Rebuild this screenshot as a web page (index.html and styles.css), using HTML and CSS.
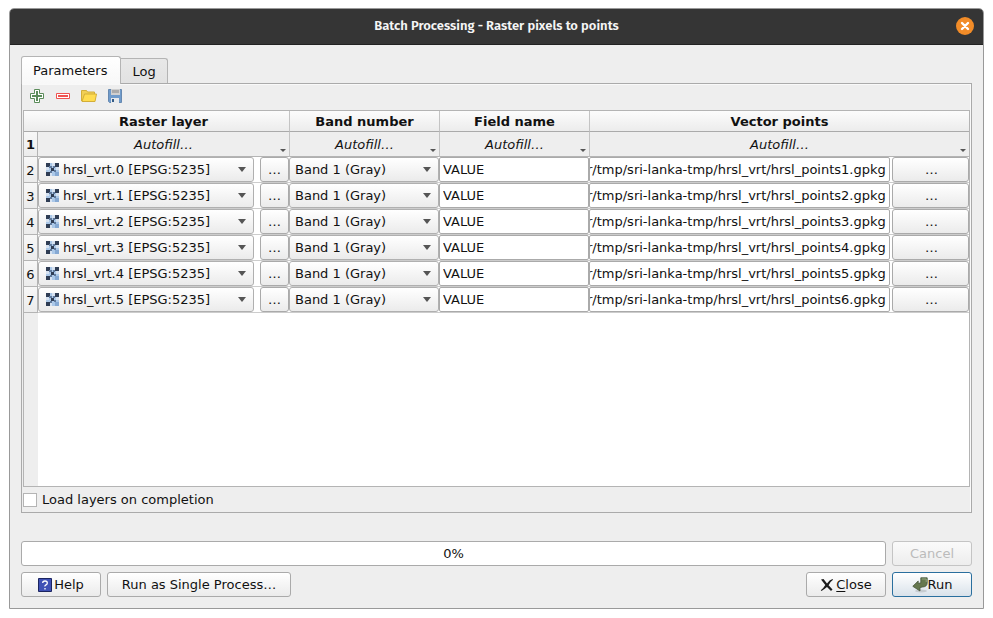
FILE: index.html
```html
<!DOCTYPE html>
<html lang="en">
<head>
<meta charset="utf-8">
<title>Batch Processing</title>
<link rel="stylesheet" href="styles.css">
</head>
<body>
<svg class="defs" aria-hidden="true">
  <symbol id="raster" viewBox="0 0 13 13">
    <path fill="#abc8e8" d="M0 0h13v13H0z"/>
    <path fill="#d6e2f1" d="M6 0h3v3H6zM0 4h3v3H0zM10 4h3v3h-3zM4 10h2v3H4z"/>
    <path fill="#2f3d54" d="M0 0h4v4H0zM9 0h4v4H9zM5 5h3v3H5zM0 9h4v4H0z"/>
    <path fill="#60799b" d="M3 3h3v2H3zM7 3h2v2H7zM4 8h2v2H4zM8 7h2v2H8z"/>
    <path fill="#86a9d3" d="M9 9h4v4H9z"/>
  </symbol>
</svg>
<main class="window">
  <header class="titlebar">
    <h1>Batch Processing - Raster pixels to points</h1>
    <button class="close" type="button" aria-label="Close window">
      <svg width="18" height="18" viewBox="0 0 18 18"><circle cx="9" cy="9" r="9" fill="#f28c28"/><path d="M6 6l6 6M12 6l-6 6" stroke="#fff" stroke-width="2.4" stroke-linecap="round"/></svg>
    </button>
  </header>
  <div class="content">
    <div class="tabs" role="tablist">
      <button class="tab active" type="button" role="tab" aria-selected="true">Parameters</button>
      <button class="tab" type="button" role="tab" aria-selected="false">Log</button>
    </div>
    <section class="pane" role="tabpanel">
      <div class="toolbar">
        <button type="button" aria-label="Add row"><svg width="16" height="16" viewBox="0 0 16 16"><path d="M5.500 1.500h5v4h4v5h-4v4h-5v-4h-4v-5h4z" fill="#fff" stroke="#5b8c5a"/><path d="M7 3h2v4h4v2H9v4H7V9H3V7h4z" fill="#5b8c5a"/></svg></button>
        <button type="button" aria-label="Remove row"><svg width="16" height="16" viewBox="0 0 16 16"><path d="M1.500 5.500h13v5h-13z" fill="#fff" stroke="#ef5350"/><path d="M3 7h10v2H3z" fill="#ef5350"/></svg></button>
        <button type="button" aria-label="Open"><svg width="16" height="16" viewBox="0 0 16 16"><path d="M.5 13V2.500h5l1 1.500h7v2" fill="#f1cf55" stroke="#d3ae38"/><path d="M1 13.500L3.500 6H15.500L14 13.500z" fill="#ffdc4f" stroke="#d3ae38"/></svg></button>
        <button type="button" aria-label="Save"><svg width="16" height="16" viewBox="0 0 16 16"><path d="M1.500 1.500h13v13h-12l-1-1z" fill="#6f9bcb" stroke="#6688b0"/><path d="M4 1h9v6H4z" fill="#d0d0d0"/><path d="M5 2h7v3H5z" fill="#aaa"/><path d="M4 10h8v5H4z" fill="#e8eaec"/><path d="M5 11h2v3H5z" fill="#335b87"/></svg></button>
      </div>
      <div class="table-frame">
        <table>
          <colgroup><col class="c-num"><col class="c-layer"><col class="c-mid"><col class="c-mid"><col></colgroup>
          <thead>
            <tr><td class="corner"></td><th scope="col">Raster layer</th><th scope="col">Band number</th><th scope="col">Field name</th><th scope="col">Vector points</th></tr>
          </thead>
          <tbody>
            <tr class="autofill"><th scope="row">1</th>
              <td><button type="button">Autofill…</button></td><td><button type="button">Autofill…</button></td><td><button type="button">Autofill…</button></td><td><button type="button">Autofill…</button></td></tr>
            <tr><th scope="row">2</th>
              <td><div class="cell layer"><span class="combo"><svg><use href="#raster"/></svg><select aria-label="Raster layer"><option>hrsl_vrt.0 [EPSG:5235]</option></select></span><button class="btn" type="button">…</button></div></td>
              <td><div class="cell"><span class="combo"><select aria-label="Band number"><option>Band 1 (Gray)</option></select></span></div></td>
              <td><div class="cell"><input class="field" type="text" aria-label="Field name" value="VALUE"></div></td>
              <td><div class="cell output"><input class="field path" type="text" aria-label="Vector points" value="r/tmp/sri-lanka-tmp/hrsl_vrt/hrsl_points1.gpkg"><button class="btn" type="button">…</button></div></td></tr>
            <tr><th scope="row">3</th>
              <td><div class="cell layer"><span class="combo"><svg><use href="#raster"/></svg><select aria-label="Raster layer"><option>hrsl_vrt.1 [EPSG:5235]</option></select></span><button class="btn" type="button">…</button></div></td>
              <td><div class="cell"><span class="combo"><select aria-label="Band number"><option>Band 1 (Gray)</option></select></span></div></td>
              <td><div class="cell"><input class="field" type="text" aria-label="Field name" value="VALUE"></div></td>
              <td><div class="cell output"><input class="field path" type="text" aria-label="Vector points" value="r/tmp/sri-lanka-tmp/hrsl_vrt/hrsl_points2.gpkg"><button class="btn" type="button">…</button></div></td></tr>
            <tr><th scope="row">4</th>
              <td><div class="cell layer"><span class="combo"><svg><use href="#raster"/></svg><select aria-label="Raster layer"><option>hrsl_vrt.2 [EPSG:5235]</option></select></span><button class="btn" type="button">…</button></div></td>
              <td><div class="cell"><span class="combo"><select aria-label="Band number"><option>Band 1 (Gray)</option></select></span></div></td>
              <td><div class="cell"><input class="field" type="text" aria-label="Field name" value="VALUE"></div></td>
              <td><div class="cell output"><input class="field path" type="text" aria-label="Vector points" value="r/tmp/sri-lanka-tmp/hrsl_vrt/hrsl_points3.gpkg"><button class="btn" type="button">…</button></div></td></tr>
            <tr><th scope="row">5</th>
              <td><div class="cell layer"><span class="combo"><svg><use href="#raster"/></svg><select aria-label="Raster layer"><option>hrsl_vrt.3 [EPSG:5235]</option></select></span><button class="btn" type="button">…</button></div></td>
              <td><div class="cell"><span class="combo"><select aria-label="Band number"><option>Band 1 (Gray)</option></select></span></div></td>
              <td><div class="cell"><input class="field" type="text" aria-label="Field name" value="VALUE"></div></td>
              <td><div class="cell output"><input class="field path" type="text" aria-label="Vector points" value="r/tmp/sri-lanka-tmp/hrsl_vrt/hrsl_points4.gpkg"><button class="btn" type="button">…</button></div></td></tr>
            <tr><th scope="row">6</th>
              <td><div class="cell layer"><span class="combo"><svg><use href="#raster"/></svg><select aria-label="Raster layer"><option>hrsl_vrt.4 [EPSG:5235]</option></select></span><button class="btn" type="button">…</button></div></td>
              <td><div class="cell"><span class="combo"><select aria-label="Band number"><option>Band 1 (Gray)</option></select></span></div></td>
              <td><div class="cell"><input class="field" type="text" aria-label="Field name" value="VALUE"></div></td>
              <td><div class="cell output"><input class="field path" type="text" aria-label="Vector points" value="r/tmp/sri-lanka-tmp/hrsl_vrt/hrsl_points5.gpkg"><button class="btn" type="button">…</button></div></td></tr>
            <tr><th scope="row">7</th>
              <td><div class="cell layer"><span class="combo"><svg><use href="#raster"/></svg><select aria-label="Raster layer"><option>hrsl_vrt.5 [EPSG:5235]</option></select></span><button class="btn" type="button">…</button></div></td>
              <td><div class="cell"><span class="combo"><select aria-label="Band number"><option>Band 1 (Gray)</option></select></span></div></td>
              <td><div class="cell"><input class="field" type="text" aria-label="Field name" value="VALUE"></div></td>
              <td><div class="cell output"><input class="field path" type="text" aria-label="Vector points" value="r/tmp/sri-lanka-tmp/hrsl_vrt/hrsl_points6.gpkg"><button class="btn" type="button">…</button></div></td></tr>
          </tbody>
        </table>
      </div>
      <label class="check"><input type="checkbox">Load layers on completion</label>
    </section>
    <div class="row progress-row">
      <div class="progress" role="progressbar" aria-label="Progress" aria-valuenow="0" aria-valuemin="0" aria-valuemax="100">0%</div>
      <button class="btn action" type="button" disabled>Cancel</button>
    </div>
    <div class="row">
      <button class="btn action" type="button"><svg width="14" height="14" viewBox="0 0 14 14"><path d="M.5.5h13v13H.5z" fill="#3f51b5" stroke="#1c2560"/><path d="M4.700 5Q4.700 3 7 3T9.300 5Q9.300 6.200 8 6.900T7 8.500M7 10v1.400" fill="none" stroke="#fff" stroke-width="1.300"/></svg><span>Help</span></button>
      <button class="btn single" type="button">Run as Single Process…</button>
      <span class="spacer"></span>
      <button class="btn action" type="button"><svg width="14" height="14" viewBox="0 0 14 14"><path d="M1 1.500L3.500 1 7 5.400Q9.500 2 12.500 1L13 1.800Q10 4 8.600 7.200L12.500 11.500 11 13 7 9Q4 11.500 1.500 13L.8 12.300Q4 9.500 5.300 7z" fill="#1b1b1b"/></svg><span class="mnemonic"><u>C</u>lose</span></button>
      <button class="btn action default" type="button"><svg width="16" height="16" viewBox="0 0 16 16"><ellipse cx="9" cy="14" rx="6" ry="1.500" fill="#c5cbd0"/><path d="M8.800.8h6.400V6Q15 9.800 10.500 10L8 10.500V14L.8 9.300 6.200 4V6.500L8.800 5.800z" fill="#66784f" stroke="#46563a" stroke-width=".8"/><path d="M9.700 2h4.500v3" fill="none" stroke="#93a47e"/></svg><span>Run</span></button>
    </div>
  </div>
</main>
</body>
</html>
```
FILE: styles.css
```css
* { box-sizing: border-box; }

body {
  margin: 0;
  padding: 8px 9px 9px;
  min-height: 100vh;
  display: flex;
  background: #fff;
  color: #111;
  font: 13px/16px "DejaVu Sans", sans-serif;
}

button, input, select { font: inherit; color: inherit; margin: 0; }
button { padding: 0; border: 0; background: none; }
svg { display: block; flex: none; }
.defs { position: absolute; width: 0; height: 0; }

.window {
  flex: 1;
  min-width: 0;
  display: flex;
  flex-direction: column;
  border: 1px solid #999;
  border-radius: 5px 5px 0 0;
  background: #eee;
}

.titlebar {
  height: 36px;
  display: grid;
  grid-template-columns: 1fr auto 1fr;
  align-items: center;
  padding: 0 9px 1px;
  background: #353535;
  border-bottom: 1px solid #222;
  border-radius: 4px 4px 0 0;
  color: #f5f5f5;
}
.titlebar h1 {
  grid-column: 2;
  margin: 0;
  font: 600 13px/18px "Fira Sans", "Noto Sans", sans-serif;
}
.close { justify-self: end; }

.content {
  flex: 1;
  display: flex;
  flex-direction: column;
  padding: 11px;
}

.tabs { display: flex; align-items: flex-end; height: 27px; }
.tab {
  height: 25px;
  padding: 2px 11px 0;
  border: 1px solid #b4b4b4;
  border-left: 0;
  border-bottom: 0;
  border-radius: 0 3px 0 0;
  background: linear-gradient(#e8e8e8, #e2e2e2);
}
.tab.active {
  position: relative;
  height: 28px;
  margin-bottom: -1px;
  padding: 1px 13px 0 11px;
  border-left: 1px solid #b4b4b4;
  border-radius: 3px 3px 0 0;
  background: linear-gradient(#fff, #f8f8f8);
}

.pane {
  flex: 1;
  display: flex;
  flex-direction: column;
  padding: 1px;
  border: 1px solid #aaa;
  box-shadow: inset -1px 1px #f9f9f9;
}

.toolbar { display: flex; gap: 10px; height: 25px; padding: 3px 6px 0; }
.toolbar button { height: 16px; }

.table-frame {
  flex: 1;
  border: 1px solid #b4b4b4;
  background: linear-gradient(90deg, #eee 14px, #fff 14px);
}
table { width: 100%; table-layout: fixed; border-collapse: separate; border-spacing: 0; }
.c-num { width: 14px; }
.c-layer { width: 251px; }
.c-mid { width: 150px; }
th, td { padding: 0; }
thead th, .corner {
  height: 21px;
  padding-top: 2px;
  border-bottom: 1px solid #aaa;
  background: linear-gradient(#fcfcfc, #ececec);
}
thead th + th, .autofill td + td { border-left: 1px solid #c4c4c4; }
tbody th {
  height: 26px;
  padding-top: 2px;
  border-right: 1px solid #b4b4b4;
  border-bottom: 1px solid #b4b4b4;
  background: linear-gradient(#f7f7f7, #ececec);
  font-weight: normal;
}
.autofill th { height: 25px; font-weight: bold; }
.autofill td { background: #eee; border-bottom: 1px solid #b4b4b4; }
.autofill button {
  position: relative;
  display: block;
  width: 100%;
  height: 24px;
  padding-top: 2px;
  font-style: italic;
}
.autofill button::after {
  content: "";
  position: absolute;
  right: 3px;
  bottom: 4px;
  border: solid transparent;
  border-width: 3px 3px 0;
  border-top-color: #555;
}
tbody td { border-bottom: 1px solid #ccc; }

.cell { display: flex; height: 25px; }
.layer { gap: 6px; }
.layer .btn { width: 29px; }
.output { gap: 2px; }
.output .btn { width: 77px; padding-left: 2px; }
.output .field { flex: 1; }

.combo { position: relative; flex: 1; min-width: 0; display: flex; }
.combo select {
  appearance: none;
  width: 100%;
  padding: 0 20px 0 5px;
  border: 1px solid #b0b0b0;
  border-radius: 3px;
  background: linear-gradient(#fff, #ebebeb);
}
.layer select { padding-left: 24px; }
.combo svg { position: absolute; left: 8px; top: 6px; width: 13px; height: 13px; }
.combo::after {
  content: "";
  position: absolute;
  right: 8px;
  top: 10px;
  border: solid transparent;
  border-width: 5px 4px 0;
  border-top-color: #555;
}

.field {
  width: 100%;
  min-width: 0;
  padding: 0 3px;
  border: 1px solid #aaa;
  border-radius: 2px;
  background: #fff;
}
.path { padding: 0; text-indent: -3px; }

.check { display: flex; align-items: center; gap: 5px; height: 24px; padding-top: 2px; }
.check input {
  appearance: none;
  width: 14px;
  height: 14px;
  border: 1px solid #b4b4b4;
  background: #fff;
}

.btn {
  display: flex;
  align-items: center;
  justify-content: center;
  gap: 2px;
  border: 1px solid #aaa;
  border-radius: 3px;
  background: linear-gradient(#fff, #ebebeb);
}
.btn:disabled { color: #bbb; border-color: #c4c4c4; background: linear-gradient(#fafafa, #ededed); }
.default { gap: 0; border-color: #2a6f9e; background: linear-gradient(#fff, #d9e2ea); }
.mnemonic u { text-underline-offset: 2px; }
.action { width: 80px; }
.single { width: 184px; }

.row { display: flex; gap: 6px; height: 25px; margin-top: 6px; }
.progress-row { margin-top: 28px; }
.progress {
  flex: 1;
  display: flex;
  align-items: center;
  justify-content: center;
  border: 1px solid #aaa;
  border-radius: 3px;
  background: #fff;
}
.spacer { flex: 1; }
```
